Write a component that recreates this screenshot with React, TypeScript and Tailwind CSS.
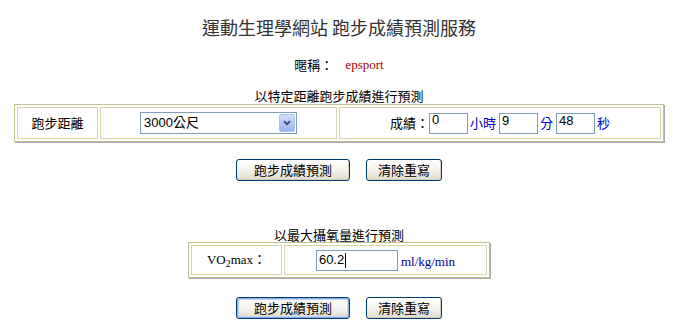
import React from 'react'

const cjk = "font-['Noto_Sans_CJK_TC',sans-serif]"
const sans = "font-['Liberation_Sans','Noto_Sans_CJK_TC',sans-serif]"
const serif = "font-['Liberation_Serif','Noto_Sans_CJK_TC',serif]"

function XpButton({ label, width, focused }: { label: string; width: string; focused?: boolean }) {
  return (
    <button
      type="button"
      className={`${width} h-[22px] rounded-[3px] border border-[#003c74] bg-linear-to-b from-white via-[#f5f4ee] to-[#dedbcb] text-[13px] leading-[20px] text-black ${cjk} ${
        focused ? 'shadow-[inset_0_0_0_1px_#8cb0e8,inset_0_0_0_2px_#bed2f3]' : 'shadow-[inset_-1px_-1px_0_#d6d0c0]'
      }`}
    >
      {label}
    </button>
  )
}

function TextBox({ value, width }: { value: string; width: string }) {
  return (
    <input
      readOnly
      value={value}
      className={`${width} h-[21px] border border-[#7f9db9] bg-white px-[2px] pb-[7px] pt-0 text-[13px] leading-[13px] text-black outline-none ${sans}`}
    />
  )
}

function Cell({ className, children }: { className: string; children: React.ReactNode }) {
  return <div className={`flex items-center justify-center border border-[#d9d6ad] ${className}`}>{children}</div>
}

export default function App() {
  return (
    <div className="flex min-h-[323px] w-[673px] flex-col items-center bg-white pl-[5px] pt-[15px] text-black">
      <h1 className={`text-[18px] font-normal leading-[24px] text-[#333333] ${cjk}`}>運動生理學網站 跑步成績預測服務</h1>

      {/* nickname */}
      <div className="mt-[17px] flex items-center text-[13px] leading-[18px]">
        <span className={cjk}>暱稱：</span>
        <span className={`ml-[12px] text-[#aa0000] ${serif}`}>epsport</span>
      </div>

      {/* by distance */}
      <p className={`mt-[14px] text-[13px] leading-[16px] ${cjk}`}>以特定距離跑步成績進行預測</p>
      <div className="flex w-[650px] gap-[2px] border border-[#c4c08e] p-[2px] shadow-[1px_1px_0_#a8a8a8]">
        <Cell className="h-[32px] w-[81px]">
          <span className={`text-[13px] ${cjk}`}>跑步距離</span>
        </Cell>
        <Cell className="h-[32px] w-[237px]">
          <div className="flex h-[22px] w-[157px] items-center border border-[#7f9db9] bg-white pr-[1px]">
            <span className={`ml-[3px] flex-1 text-[13px] leading-[16px] ${sans}`}>3000公尺</span>
            <div className="flex h-[18px] w-[16px] items-center justify-center rounded-[2px] border border-[#a9c0f0] bg-linear-to-b from-[#d2dffc] to-[#98b4ef]">
              <svg width="8" height="6" viewBox="0 0 8 6">
                <path d="M1 1.2 L4 4.2 L7 1.2" fill="none" stroke="#3b4f7a" strokeWidth="2" />
              </svg>
            </div>
          </div>
        </Cell>
        <Cell className="h-[32px] flex-1">
          <div className={`flex items-center text-[13px] leading-[16px] ${cjk}`}>
            <span>成績：</span>
            <TextBox value="0" width="w-[39px]" />
            <span className="ml-[2px] text-[#0000cc]">小時</span>
            <span className="ml-[3px]">
              <TextBox value="9" width="w-[39px]" />
            </span>
            <span className="ml-[2px] text-[#0000cc]">分</span>
            <span className="ml-[3px]">
              <TextBox value="48" width="w-[39px]" />
            </span>
            <span className="ml-[2px] text-[#0000cc]">秒</span>
          </div>
        </Cell>
      </div>

      <div className="mt-[17px] flex gap-[16px]">
        <XpButton label="跑步成績預測" width="w-[114px]" />
        <XpButton label="清除重寫" width="w-[76px]" />
      </div>

      {/* by VO2max */}
      <p className={`mt-[47px] text-[13px] leading-[14px] ${cjk}`}>以最大攝氧量進行預測</p>
      <div className="flex w-[302px] gap-[2px] border border-[#c4c08e] p-[2px] shadow-[1px_1px_0_#a8a8a8]">
        <Cell className="h-[30px] w-[91px]">
          <span className={`text-[13px] leading-[16px] ${serif}`}>
            VO<sub className="relative top-[3px] text-[10px]">2</sub>max：
          </span>
        </Cell>
        <Cell className="h-[30px] flex-1">
          <div className="flex items-center">
            <div className="flex h-[21px] w-[82px] items-start border border-[#7f9db9] bg-white px-[2px] pt-[2px]">
              <span className={`text-[13px] leading-[14px] ${sans}`}>60.2</span>
              <span className="ml-[1px] h-[15px] w-px bg-black" />
            </div>
            <span className={`ml-[3px] mt-[4px] text-[13px] leading-[16px] text-[#000099] ${serif}`}>ml/kg/min</span>
          </div>
        </Cell>
      </div>

      <div className="mt-[19px] flex gap-[16px]">
        <XpButton label="跑步成績預測" width="w-[114px]" focused />
        <XpButton label="清除重寫" width="w-[76px]" />
      </div>
    </div>
  )
}
